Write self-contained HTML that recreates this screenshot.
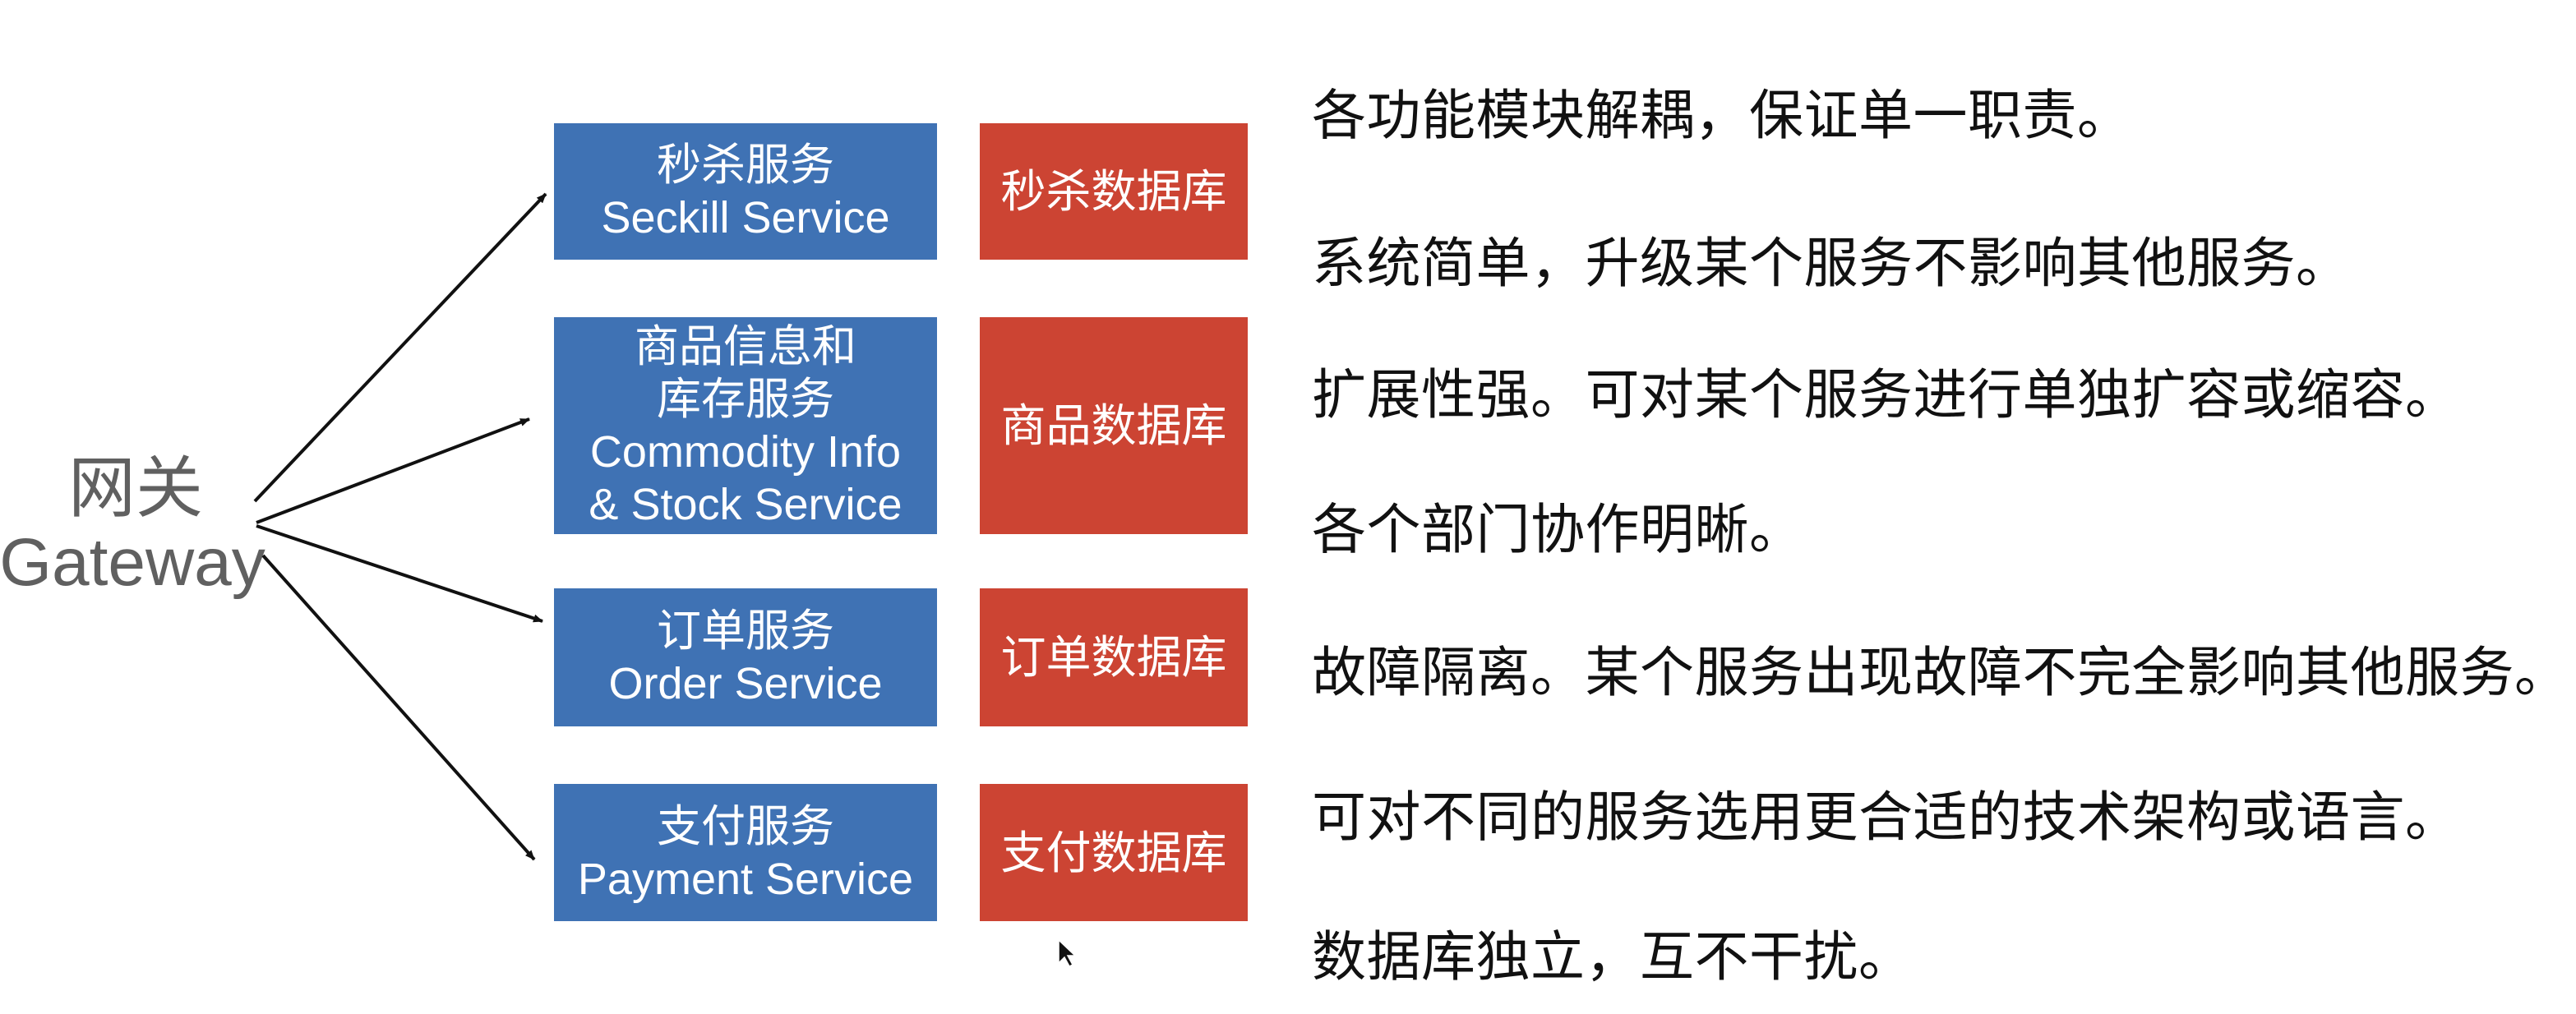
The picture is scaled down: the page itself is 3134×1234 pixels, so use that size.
<!DOCTYPE html>
<html><head><meta charset="utf-8"><style>
body{margin:0;width:3134px;height:1234px;background:#fff;position:relative;overflow:hidden;font-family:"Liberation Sans","Noto Sans CJK SC",sans-serif}
.b,.r{position:absolute;display:flex;flex-direction:column;align-items:center;justify-content:center;color:#fff;text-align:center;font-size:54px;line-height:64px}
.b{left:674px;width:466px;background:#3f72b4}
.r{left:1192px;width:326px;background:#cc4433;font-size:55px}
.t{position:absolute;left:1596px;font-size:66px;color:#111;white-space:nowrap;line-height:80px;letter-spacing:0.5px}
.g{position:absolute;left:0;width:330px;text-align:center;color:#606060;font-size:82px;line-height:90px}
</style></head><body>
<div class="g" style="top:550px">网关</div>
<div class="g" style="top:640px;left:-4px">Gateway</div>
<svg width="3134" height="1234" style="position:absolute;left:0;top:0">
<defs><marker id="m" markerWidth="12" markerHeight="10" refX="11" refY="5" orient="auto" markerUnits="userSpaceOnUse" viewBox="0 0 12 10"><path d="M0 0L12 5L0 10z" fill="#111"/></marker></defs>
<g stroke="#111" stroke-width="4" fill="none" marker-end="url(#m)">
<line x1="310" y1="610" x2="664" y2="236"/>
<line x1="312" y1="636" x2="644" y2="510"/>
<line x1="312" y1="640" x2="660" y2="756"/>
<line x1="320" y1="676" x2="650" y2="1046"/>
</g>
<path d="M1288 1144 L1288 1172 L1295 1165 L1301 1176 L1305 1174 L1299 1163 L1308 1163 Z" fill="#111" stroke="#fff" stroke-width="1.5"/>
</svg>
<div class="b" style="top:150px;height:166px"><div>秒杀服务</div><div>Seckill Service</div></div>
<div class="b" style="top:386px;height:264px"><div>商品信息和</div><div>库存服务</div><div>Commodity Info</div><div>&amp; Stock Service</div></div>
<div class="b" style="top:716px;height:168px"><div>订单服务</div><div>Order Service</div></div>
<div class="b" style="top:954px;height:167px"><div>支付服务</div><div>Payment Service</div></div>
<div class="r" style="top:150px;height:166px">秒杀数据库</div>
<div class="r" style="top:386px;height:264px">商品数据库</div>
<div class="r" style="top:716px;height:168px">订单数据库</div>
<div class="r" style="top:954px;height:167px">支付数据库</div>
<div class="t" style="top:100px">各功能模块解耦，保证单一职责。</div>
<div class="t" style="top:280px">系统简单，升级某个服务不影响其他服务。</div>
<div class="t" style="top:440px">扩展性强。可对某个服务进行单独扩容或缩容。</div>
<div class="t" style="top:604px">各个部门协作明晰。</div>
<div class="t" style="top:778px">故障隔离。某个服务出现故障不完全影响其他服务。</div>
<div class="t" style="top:954px">可对不同的服务选用更合适的技术架构或语言。</div>
<div class="t" style="top:1124px">数据库独立，互不干扰。</div>
</body></html>
